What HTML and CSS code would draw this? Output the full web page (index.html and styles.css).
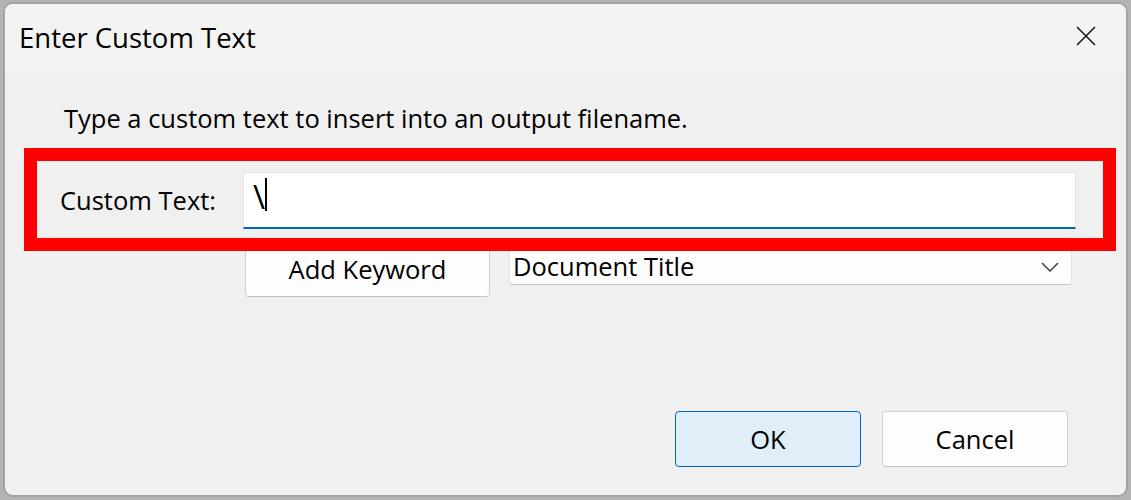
FILE: index.html
```html
<!DOCTYPE html>
<html lang="en">
<head>
<meta charset="utf-8">
<title>Enter Custom Text</title>
<link rel="stylesheet" href="styles.css">
</head>
<body>
<div class="window">
  <div class="titlebar">
    <span class="title">Enter Custom Text</span>
    <svg class="close" width="20" height="20" viewBox="0 0 20 20" aria-hidden="true">
      <path d="M1 1 L19 19 M19 1 L1 19" stroke="#1a1a1a" stroke-width="1.6" fill="none"/>
    </svg>
  </div>
  <div class="content">
    <p class="intro">Type a custom text to insert into an output filename.</p>
    <div class="form">
      <label class="label">Custom Text:</label>
      <div class="textbox"><span class="bs">\</span><span class="caret"></span></div>
      <div></div>
      <div class="keyword-row">
        <div class="btn keyword">Add Keyword</div>
        <div class="combo">
          <span class="combo-text">Document Title</span>
          <svg class="chev" width="18" height="10" viewBox="0 0 18 10" aria-hidden="true">
            <path d="M1 1 L9 9 L17 1" stroke="#404040" stroke-width="1.5" fill="none"/>
          </svg>
        </div>
      </div>
    </div>
    <div class="actions">
      <div class="btn primary">OK</div>
      <div class="btn">Cancel</div>
    </div>
  </div>
  <div class="highlight"></div>
</div>
</body>
</html>
```
FILE: styles.css
```css
html, body {
  margin: 0;
  padding: 0;
}
body {
  background: #b3b3b3;
  width: 1131px;
  height: 500px;
  overflow: hidden;
  font-family: "Open Sans", "Noto Sans", "Liberation Sans", sans-serif;
  color: #000;
}
.window {
  position: relative;
  box-sizing: border-box;
  margin: 2px 3px 0 3px;
  height: 495px;
  border: 2px solid #a4a4a4;
  border-radius: 10px;
  background: #f0f0f0;
  overflow: hidden;
}
.titlebar {
  height: 68px;
  background: #f3f3f2;
  display: flex;
  align-items: center;
  justify-content: space-between;
  padding-left: 14px;
}
.title {
  font-size: 27.5px;
  line-height: 36px;
}
.close {
  margin-right: 30px;
  margin-top: -4px;
}
.content {
  padding: 0 58px 0 55px;
}
.intro {
  margin: 28px 0 0 4px;
  font-size: 25.5px;
  line-height: 36px;
}
.form {
  margin-top: 36px;
  display: grid;
  grid-template-columns: 183px 833px;
  row-gap: 12px;
}
.label {
  font-size: 25.5px;
  line-height: 36px;
  padding-top: 10px;
}
.textbox {
  box-sizing: border-box;
  height: 57px;
  background: #ffffff;
  border: 1px solid #e6e6e6;
  border-bottom: 2px solid #0067c0;
  border-radius: 4px 4px 0 0;
  padding: 5px 0 0 9px;
  font-size: 25.5px;
  line-height: 36px;
}
.bs {
  font-size: 33px;
}
.caret {
  display: inline-block;
  width: 0;
  height: 33px;
  border-left: 2px solid #000;
  vertical-align: -2px;
}
.keyword-row {
  display: flex;
  align-items: flex-start;
  gap: 19px;
  padding-left: 2px;
}
.btn {
  box-sizing: border-box;
  height: 56px;
  width: 186px;
  display: flex;
  align-items: center;
  justify-content: center;
  background: #fdfdfd;
  border: 1px solid #d2d2d2;
  border-bottom-color: #c2c2c2;
  border-radius: 4px;
  font-size: 25.5px;
  line-height: 36px;
}
.btn.keyword {
  width: 245px;
}
.btn.primary {
  background: #e0eef9;
  border: 1px solid #0067c0;
}
.combo {
  box-sizing: border-box;
  margin-top: 6px;
  width: 563px;
  height: 38px;
  background: #fdfdfd;
  border: 1px solid #e3e3e3;
  border-bottom-color: #c4c4c4;
  border-radius: 3px;
  display: flex;
  align-items: center;
  justify-content: space-between;
  padding: 0 12px 0 3px;
  font-size: 25.5px;
  line-height: 36px;
}
.chev {
  margin-top: 1px;
}
.actions {
  margin-top: 114px;
  display: flex;
  justify-content: flex-end;
  gap: 21px;
}
.highlight {
  position: absolute;
  left: 19px;
  top: 144px;
  width: 1092px;
  height: 103px;
  box-sizing: border-box;
  border: 13px solid #ff0000;
  pointer-events: none;
}
```
